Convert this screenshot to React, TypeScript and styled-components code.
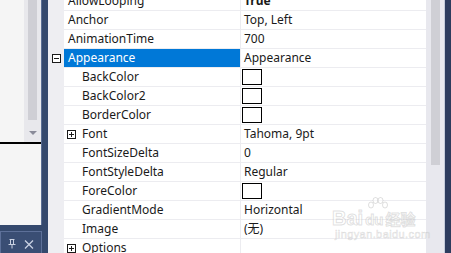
import React from 'react';
import styled, { createGlobalStyle } from 'styled-components';

const Global = createGlobalStyle`
  html, body { margin: 0; padding: 0; width: 451px; height: 253px; overflow: hidden; background: #35496d; }
  #root { width: 451px; height: 253px; }
`;

const Shell = styled.div`
  position: relative;
  display: flex;
  width: 451px;
  height: 253px;
  overflow: hidden;
  font-family: 'Noto Sans', 'Noto Sans CJK SC', sans-serif;
  font-size: 12px;
  color: #1a1a1a;
`;

const LeftPanel = styled.div`
  width: 42px;
  display: flex;
  flex-direction: column;
  flex-shrink: 0;
`;

const ListArea = styled.div`
  height: 142px;
  display: flex;
  border-right: 1px solid #5b6e94;
`;

const ListContent = styled.div`
  width: 24px;
  background: #f5f5f5;
`;

const VScroll = styled.div<{ $w: number }>`
  width: ${p => p.$w}px;
  background: #e8e8ec;
  display: flex;
  flex-direction: column;
  align-items: center;
`;

const Thumb = styled.div<{ $h: number }>`
  width: 9px;
  height: ${p => p.$h}px;
  background: #cfcfd5;
`;

const DownArrow = styled.div`
  margin-top: 11px;
  width: 0;
  height: 0;
  border-left: 4px solid transparent;
  border-right: 4px solid transparent;
  border-top: 4px solid #8a8b99;
`;

const Divider = styled.div`
  height: 2px;
  background: #000;
  border-right: 1px solid #5b6e94;
`;

const LowerArea = styled.div`
  height: 81px;
  background: #f5f5f5;
  border-right: 1px solid #5b6e94;
`;

const Gap = styled.div`
  height: 6px;
`;

const ToolTab = styled.div`
  flex: 1;
  border: 1px solid #5d7099;
  border-bottom: none;
  background: #3a4e74;
  display: flex;
  align-items: center;
  padding: 3px 0 0 7px;
  gap: 8px;
`;

const Splitter = styled.div`
  width: 6px;
  background: #35496d;
  flex-shrink: 0;
`;

const GridPanel = styled.div`
  display: flex;
  width: 397px;
  flex-shrink: 0;
  background: #fff;
`;

const Rows = styled.div`
  width: 378px;
  height: 253px;
  overflow: hidden;
  background: #fff;
`;

const RowList = styled.div`
  margin-top: -8px;
`;

const Row = styled.div`
  display: grid;
  grid-template-columns: 16px 177px 185px;
  height: 19px;
`;

const Margin = styled.div`
  background: #eeeef2;
  display: flex;
  align-items: center;
  padding-left: 4px;
`;

const NameCell = styled.div<{ $level: number; $selected?: boolean }>`
  display: flex;
  align-items: center;
  height: 18px;
  line-height: 18px;
  border-bottom: 1px solid #ececf0;
  border-right: 1px solid #ececf0;
  background: ${p => (p.$selected ? '#0078d7' : '#fff')};
  color: ${p => (p.$selected ? '#fff' : '#1a1a1a')};
  padding-left: ${p => (p.$level ? 3 : 4)}px;
  white-space: nowrap;
  overflow: hidden;
`;

const NameText = styled.span<{ $level: number; $hasToggle?: boolean }>`
  margin-left: ${p => (p.$level ? (p.$hasToggle ? 6 : 15) : 0)}px;
`;

const ValueCell = styled.div<{ $bold?: boolean }>`
  display: flex;
  align-items: center;
  height: 18px;
  line-height: 18px;
  border-bottom: 1px solid #ececf0;
  padding-left: 3px;
  font-weight: ${p => (p.$bold ? 700 : 400)};
  white-space: nowrap;
  overflow: hidden;
`;

const Swatch = styled.div`
  width: 18px;
  height: 14px;
  border: 1px solid #000;
  background: #fff;
  margin-left: -2px;
`;

const ToggleBox = styled.div`
  width: 7px;
  height: 7px;
  border: 1px solid #1a1a1a;
  position: relative;
  background: #fff;
  flex-shrink: 0;
  &::before {
    content: '';
    position: absolute;
    left: 1px;
    top: 3px;
    width: 5px;
    height: 1px;
    background: #1a1a1a;
  }
`;

const PlusBox = styled(ToggleBox)`
  &::after {
    content: '';
    position: absolute;
    left: 3px;
    top: 1px;
    width: 1px;
    height: 5px;
    background: #1a1a1a;
  }
`;

const GridScroll = styled.div`
  width: 18px;
  background: #e8e8ee;
  border-right: 1px solid #c4cbda;
  display: flex;
  justify-content: center;
`;

const RightEdge = styled.div`
  flex: 1;
  background: #2d3c5e;
`;

const Watermark = styled.div`
  position: absolute;
  left: 332px;
  top: 197px;
  width: 92px;
  display: flex;
  flex-direction: column;
  pointer-events: none;
  font-family: 'Liberation Sans', 'Noto Sans CJK SC', sans-serif;
  color: rgba(255, 255, 255, 0.55);
  -webkit-text-stroke: 1px rgba(150, 150, 150, 0.3);
`;

const PawRow = styled.div`
  height: 11px;
  padding-left: 36px;
`;

const MarkLine = styled.div`
  display: flex;
  align-items: baseline;
  gap: 2px;
  font-size: 20px;
  font-weight: 700;
  line-height: 21px;
  height: 21px;
`;

const MarkPart = styled.span<{ $size: number }>`
  font-size: ${p => p.$size}px;
`;

const MarkSmall = styled.div`
  font-size: 11px;
  line-height: 11px;
  letter-spacing: 0.4px;
  -webkit-text-stroke: 0.6px rgba(150, 150, 150, 0.32);
  padding-left: 3px;
  white-space: nowrap;
`;

type Prop = {
  name: string;
  value?: string;
  level: number;
  bold?: boolean;
  swatch?: boolean;
  category?: boolean;
  selected?: boolean;
  plus?: boolean;
};

const props: Prop[] = [
  { name: 'AllowLooping', value: 'True', level: 0, bold: true },
  { name: 'Anchor', value: 'Top, Left', level: 0 },
  { name: 'AnimationTime', value: '700', level: 0 },
  { name: 'Appearance', value: 'Appearance', level: 0, category: true, selected: true },
  { name: 'BackColor', level: 1, swatch: true },
  { name: 'BackColor2', level: 1, swatch: true },
  { name: 'BorderColor', level: 1, swatch: true },
  { name: 'Font', value: 'Tahoma, 9pt', level: 1, plus: true },
  { name: 'FontSizeDelta', value: '0', level: 1 },
  { name: 'FontStyleDelta', value: 'Regular', level: 1 },
  { name: 'ForeColor', level: 1, swatch: true },
  { name: 'GradientMode', value: 'Horizontal', level: 1 },
  { name: 'Image', value: '(无)', level: 1 },
  { name: 'Options', value: '', level: 1, plus: true },
];

const PinIcon = () => (
  <svg width="8" height="10" viewBox="0 0 8 10">
    <path d="M1.5 0.5h5M2.5 0.5v5M5.5 0.5v5M0.5 5.5h7M4 5.5v4" stroke="#c9d1e2" strokeWidth="1" fill="none" />
  </svg>
);

const CloseIcon = () => (
  <svg width="10" height="9" viewBox="0 0 10 9">
    <path d="M1 0.5l8 8M9 0.5l-8 8" stroke="#c9d1e2" strokeWidth="1.3" fill="none" />
  </svg>
);

const Paw = () => (
  <svg width="20" height="12" viewBox="0 0 20 12" fill="rgba(255,255,255,0.55)" stroke="rgba(150,150,150,0.3)" strokeWidth="1">
    <ellipse cx="3" cy="8" rx="2.5" ry="3" />
    <ellipse cx="7.5" cy="3.5" rx="2.5" ry="3" />
    <ellipse cx="12.5" cy="3.5" rx="2.5" ry="3" />
    <ellipse cx="17" cy="8" rx="2.5" ry="3" />
  </svg>
);

export default function App() {
  return (
    <Shell>
      <Global />
      <LeftPanel>
        <ListArea>
          <ListContent />
          <VScroll $w={17}>
            <Thumb $h={120} />
            <DownArrow />
          </VScroll>
        </ListArea>
        <Divider />
        <LowerArea />
        <Gap />
        <ToolTab>
          <PinIcon />
          <CloseIcon />
        </ToolTab>
      </LeftPanel>
      <Splitter />
      <GridPanel>
        <Rows>
          <RowList>
            {props.map(p => (
              <Row key={p.name}>
                <Margin>{p.category && <ToggleBox />}</Margin>
                <NameCell $level={p.level} $selected={p.selected}>
                  {p.plus && <PlusBox />}
                  <NameText $level={p.level} $hasToggle={p.plus}>{p.name}</NameText>
                </NameCell>
                <ValueCell $bold={p.bold}>{p.swatch ? <Swatch /> : p.value}</ValueCell>
              </Row>
            ))}
          </RowList>
        </Rows>
        <GridScroll>
          <Thumb $h={165} />
        </GridScroll>
      </GridPanel>
      <RightEdge />
      <Watermark>
        <PawRow>
          <Paw />
        </PawRow>
        <MarkLine>
          <MarkPart $size={20}>Bai</MarkPart>
          <MarkPart $size={15}>du</MarkPart>
          <MarkPart $size={15}>经验</MarkPart>
        </MarkLine>
        <MarkSmall>jingyan.baidu.com</MarkSmall>
      </Watermark>
    </Shell>
  );
}
